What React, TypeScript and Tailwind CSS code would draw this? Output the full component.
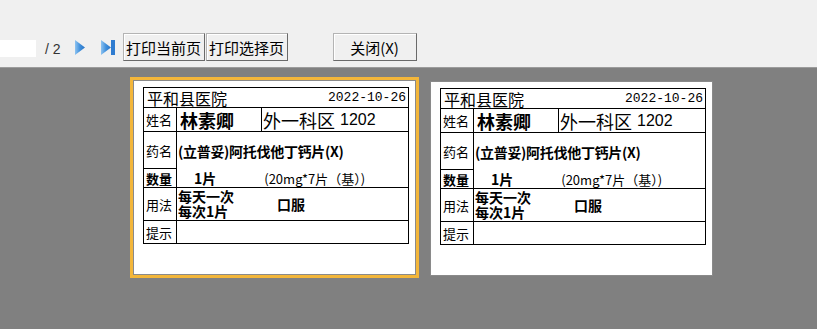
import React from "react";

const cjk = "font-['Noto_Sans_CJK_SC',sans-serif]";

function PlayIcon({ skip }: { skip?: boolean }) {
  return (
    <svg width={skip ? 14 : 11} height="15" viewBox={skip ? "0 0 14 15" : "0 0 11 15"}>
      <defs>
        <linearGradient id={skip ? "gs" : "gp"} x1="0" y1="0" x2="1" y2="0">
          <stop offset="0" stopColor="#8ec3f0" />
          <stop offset="0.5" stopColor="#3f8fdc" />
          <stop offset="1" stopColor="#2a74c4" />
        </linearGradient>
      </defs>
      <polygon points="0,0 10,7.5 0,15" fill={`url(#${skip ? "gs" : "gp"})`} />
      {skip && <rect x="10" y="0" width="4" height="15" fill="#2f7cd0" />}
    </svg>
  );
}

function ToolButton({ label, width }: { label: string; width: string }) {
  return (
    <button
      className={`${width} h-[28px] flex items-center justify-center bg-[#f0f0f0] border border-[#b4b4b4] border-r-[#6a6a6a] border-b-[#6a6a6a] shadow-[inset_1px_1px_0_#ffffff] text-[15px] leading-none text-black ${cjk}`}
    >
      {label}
    </button>
  );
}

function Label({ children, bold }: { children: React.ReactNode; bold?: boolean }) {
  return (
    <span className={`text-[13px] leading-none pl-[2px] ${bold ? "font-bold" : ""}`}>
      {children}
    </span>
  );
}

function Prescription() {
  return (
    <div className={`w-[266px] border border-black text-black ${cjk}`}>
      <div className="h-[20px] border-b border-black flex items-center justify-between pl-[3px] pr-[2px]">
        <span className="text-[16px] leading-none">平和县医院</span>
        <span className="font-['Liberation_Mono',monospace] text-[13px] leading-none">2022-10-26</span>
      </div>
      <div className="h-[24px] border-b border-black flex">
        <div className="w-[33px] border-r border-black flex items-center">
          <Label>姓名</Label>
        </div>
        <div className="w-[85px] border-r border-black flex items-center pl-[3px] text-[18px] font-bold leading-none">
          林素卿
        </div>
        <div className="flex-1 flex items-center pl-[1px] leading-none">
          <span className="text-[18px]">外一科区</span>
          <span className="text-[16px] ml-[5px] font-['Liberation_Sans',sans-serif]">1202</span>
        </div>
      </div>
      <div className="h-[56px] border-b border-black flex">
        <div className="w-[33px] border-r border-black flex flex-col">
          <div className="h-[37px] border-b border-black flex items-center">
            <Label>药名</Label>
          </div>
          <div className="flex-1 flex items-center">
            <Label bold>数量</Label>
          </div>
        </div>
        <div className="flex-1 flex flex-col">
          <div className="h-[37px] flex items-center pl-[1px] text-[14px] font-bold leading-none tracking-[-0.3px]">
            (立普妥)阿托伐他丁钙片(X)
          </div>
          <div className="flex-1 flex items-center leading-none">
            <span className="ml-[17px] text-[14px] font-bold">1片</span>
            <span className="ml-[48px] text-[13px]">(20mg*7片（基）)</span>
          </div>
        </div>
      </div>
      <div className="h-[33px] border-b border-black flex">
        <div className="w-[33px] border-r border-black flex items-center">
          <Label>用法</Label>
        </div>
        <div className="flex-1 flex items-center">
          <div className="flex flex-col pl-[1px] text-[14px] font-bold leading-[15px]">
            <span>每天一次</span>
            <span>每次1片</span>
          </div>
          <span className="ml-[43px] text-[14px] font-bold leading-none">口服</span>
        </div>
      </div>
      <div className="h-[22px] flex">
        <div className="w-[33px] border-r border-black flex items-center">
          <Label>提示</Label>
        </div>
        <div className="flex-1" />
      </div>
    </div>
  );
}

function Page() {
  return (
    <div className="w-[283px] h-[195px] bg-white border border-[#8a8a8a] pl-[9px] pt-[6px]">
      <Prescription />
    </div>
  );
}

export default function App() {
  return (
    <div className="w-[817px] h-[329px] flex flex-col overflow-hidden bg-[#808080]">
      <div className="h-[68px] shrink-0 bg-[#f0f0f0] border-b border-[#9c9c9c] flex items-start pt-[33px]">
        <div className="w-[36px] h-[17px] mt-[7px] bg-white" />
        <span className="ml-[9px] mt-[9px] text-[14px] leading-none text-[#333] font-['Liberation_Sans',sans-serif]">
          / 2
        </span>
        <div className="ml-[14px] mt-[7px]">
          <PlayIcon />
        </div>
        <div className="ml-[15px] mt-[7px]">
          <PlayIcon skip />
        </div>
        <div className="ml-[8px] flex gap-[1px]">
          <ToolButton label="打印当前页" width="w-[82px]" />
          <ToolButton label="打印选择页" width="w-[82px]" />
        </div>
        <div className="ml-[45px]">
          <ToolButton label="关闭(X)" width="w-[84px]" />
        </div>
      </div>
      <div className="flex items-start pl-[130px] pt-[9px] gap-[11px]">
        <div className="border-[3px] border-[#f3b63a]">
          <Page />
        </div>
        <div className="mt-[4px]">
          <Page />
        </div>
      </div>
    </div>
  );
}
